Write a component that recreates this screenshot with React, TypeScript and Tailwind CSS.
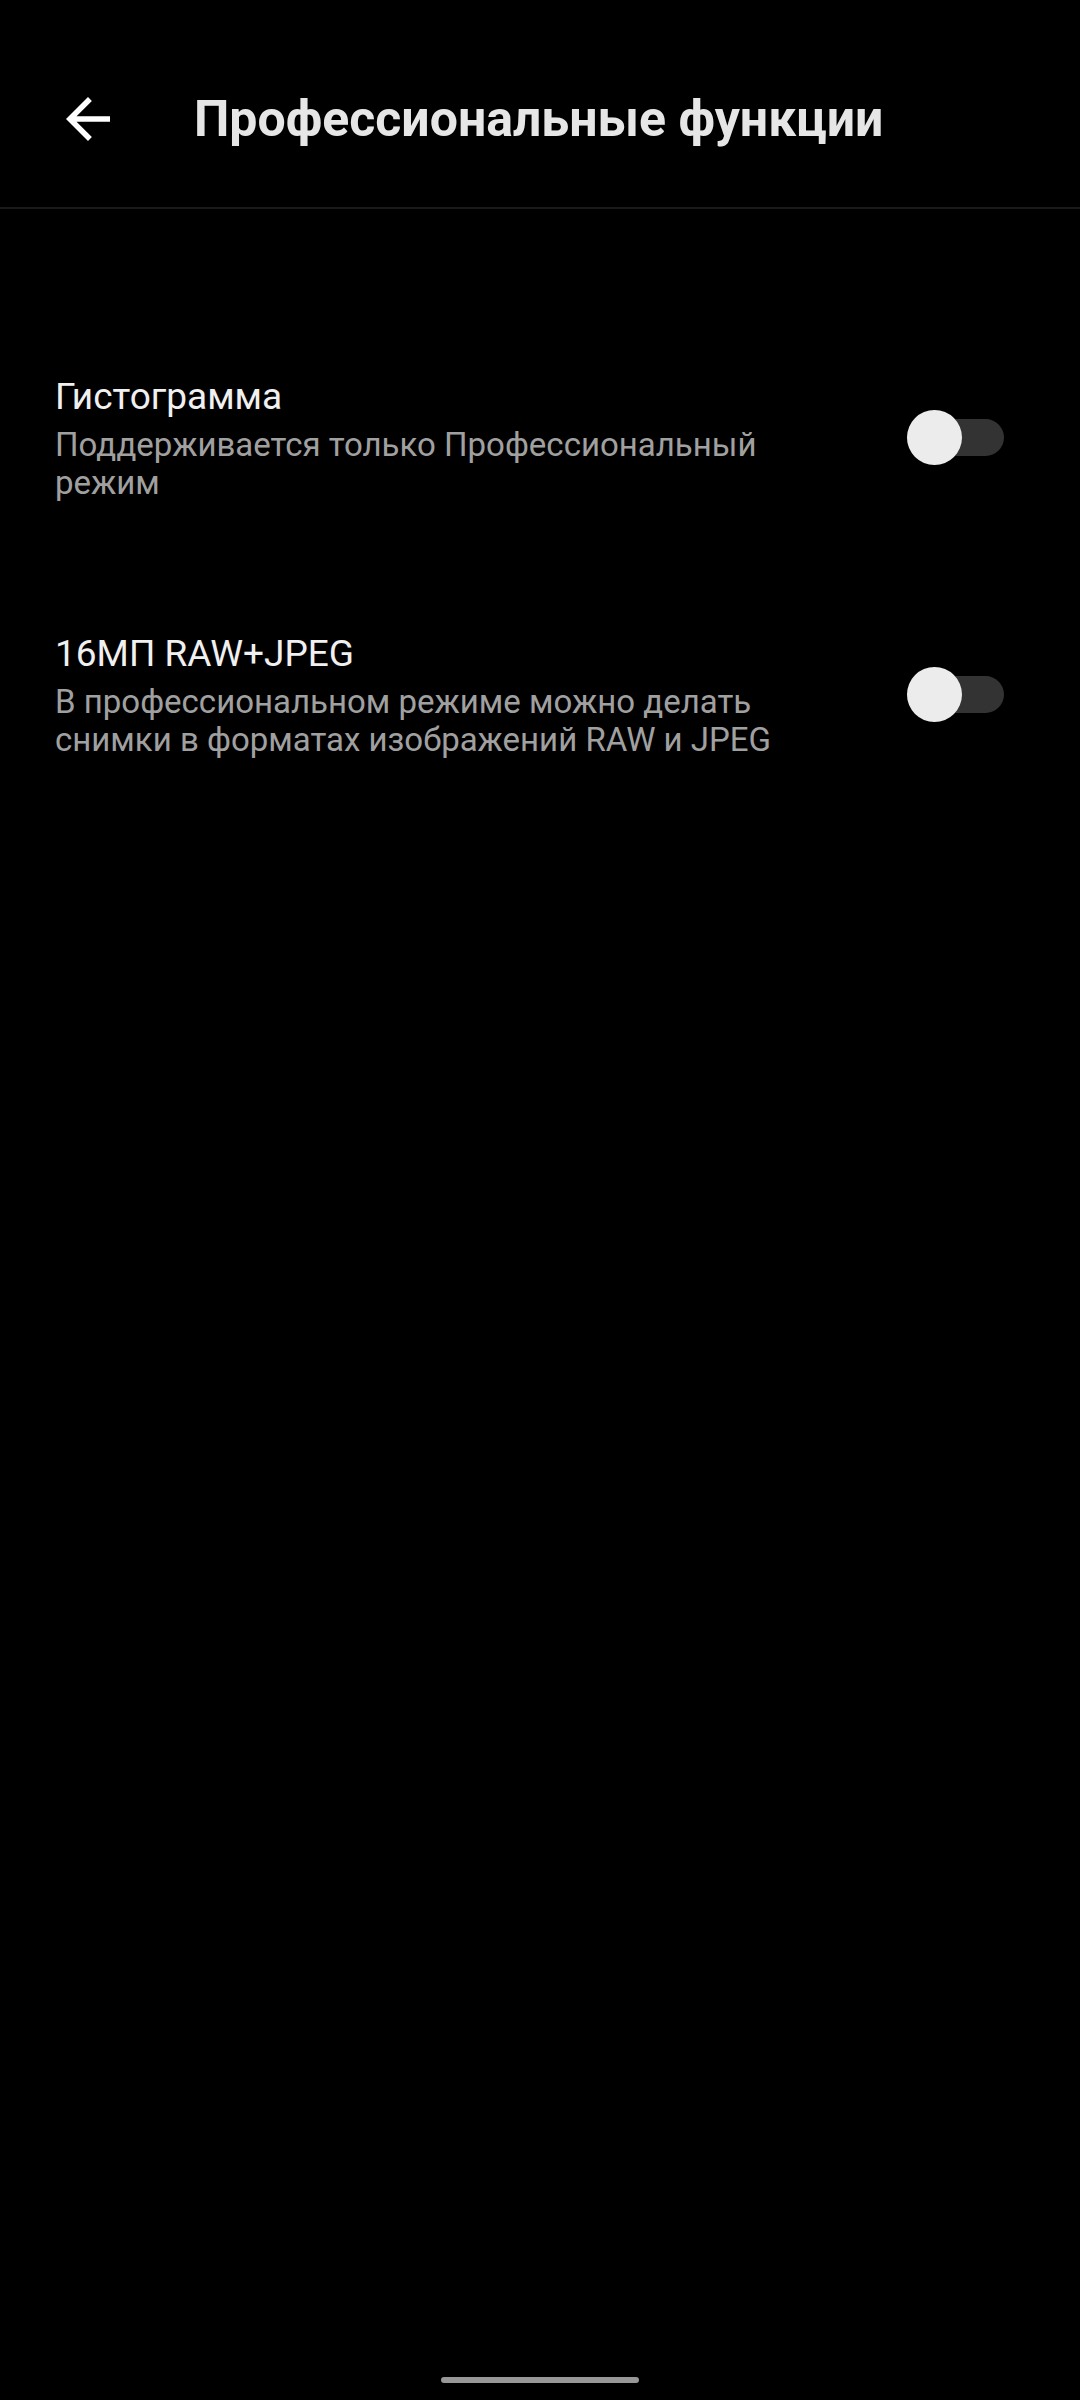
import React from 'react';

type SettingItem = {
  title: string;
  subtitle: string;
  enabled: boolean;
};

const items: SettingItem[] = [
  {
    title: 'Гистограмма',
    subtitle: 'Поддерживается только Профессиональный режим',
    enabled: false,
  },
  {
    title: '16МП RAW+JPEG',
    subtitle: 'В профессиональном режиме можно делать снимки в форматах изображений RAW и JPEG',
    enabled: false,
  },
];

const BackArrow = () => (
  <svg width="66" height="66" viewBox="0 0 24 24" fill="#ffffff">
    <path d="M20 11H7.83l5.59-5.59L12 4l-8 8 8 8 1.41-1.41L7.83 13H20v-2z" />
  </svg>
);

const Toggle: React.FC<{ on: boolean }> = ({ on }) => (
  <div className="relative w-[97px] h-[55px] flex items-center shrink-0">
    <div className="w-full h-[37px] rounded-full bg-[#333333]" />
    <div
      className={`absolute top-0 w-[55px] h-[55px] rounded-full bg-[#ececec] ${on ? 'right-0' : 'left-0'}`}
    />
  </div>
);

export default function App() {
  return (
    <div
      className="w-[1080px] h-[2400px] bg-black flex flex-col"
      style={{ fontFamily: 'Roboto, "Noto Sans", sans-serif' }}
    >
      <header className="h-[207px] pt-[30px] flex items-center pl-[55px]">
        <BackArrow />
        <h1 className="ml-[73px] text-[50px] leading-[64px] font-bold text-[#e6e6e6]">
          Профессиональные функции
        </h1>
      </header>
      <div className="h-[2px] bg-[#1a1a1a]" />

      <div className="flex-1 flex flex-col pt-[100px]">
        {items.map((item) => (
          <div key={item.title} className="flex items-center py-[64px] pl-[55px] pr-[76px]">
            <div className="flex-1 pr-[100px]">
              <div className="text-[37px] leading-[48px] text-[#f0f0f0]">{item.title}</div>
              <div className="mt-[5px] text-[33px] leading-[38px] text-[#a0a0a0]">{item.subtitle}</div>
            </div>
            <Toggle on={item.enabled} />
          </div>
        ))}
      </div>

      <div className="h-[23px] flex justify-center">
        <div className="w-[198px] h-[6px] rounded-full bg-[#979797]" />
      </div>
    </div>
  );
}
